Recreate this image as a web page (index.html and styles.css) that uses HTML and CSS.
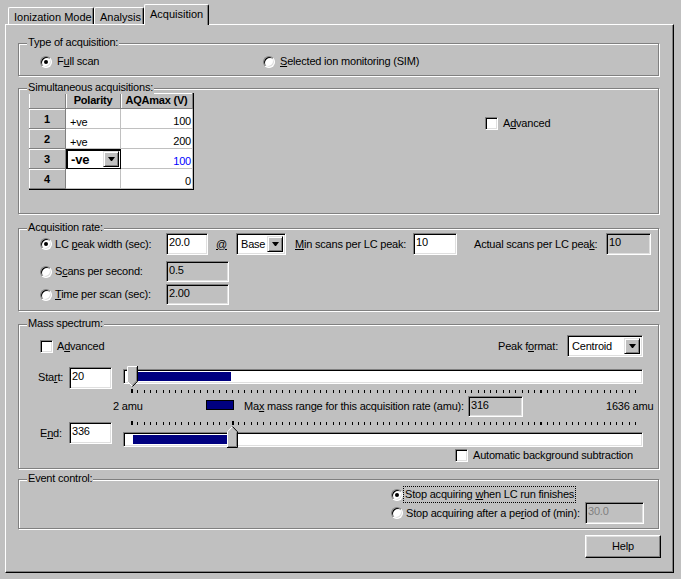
FILE: index.html
```html
<!DOCTYPE html>
<html lang="en">
<head>
    <meta charset="UTF-8">
    <title>Acquisition</title>
    <link rel="stylesheet" href="styles.css">
</head>
<body>

    <!-- Tab strip -->
    <div class="tabs">
        <div class="tab tab-ion">Ionization Mode</div>
        <div class="tab tab-analysis">Analysis</div>
        <div class="tab tab-active">Acquisition</div>
    </div>

    <div class="panel">

        <!-- Type of acquisition -->
        <div class="group g-type">
            <span class="group-title">Type of acquisition:</span>
            <div class="type-row">
                <div class="opt opt-full"><span class="radio on"></span>F<u>u</u>ll scan</div>
                <div class="opt"><span class="radio"></span><u>S</u>elected ion monitoring (SIM)</div>
            </div>
        </div>

        <!-- Simultaneous acquisitions -->
        <div class="group g-sim">
            <span class="group-title">Simultaneous acquisitions:</span>
            <div class="grid">
                <div class="hd"></div>
                <div class="hd">Polarity</div>
                <div class="hd">AQAmax (V)</div>

                <div class="hd rowhd">1</div>
                <div class="cell pol">+ve</div>
                <div class="cell num">100</div>

                <div class="hd rowhd">2</div>
                <div class="cell pol">+ve</div>
                <div class="cell num">200</div>

                <div class="hd rowhd">3</div>
                <div class="cell edit">
                    <span class="edit-text">-ve</span>
                    <span class="drop"><i class="arrow"></i></span>
                </div>
                <div class="cell num changed">100</div>

                <div class="hd rowhd">4</div>
                <div class="cell pol"></div>
                <div class="cell num">0</div>
            </div>
            <div class="opt sim-adv"><span class="check"></span>A<u>d</u>vanced</div>
        </div>

        <!-- Acquisition rate -->
        <div class="group g-rate">
            <span class="group-title">Acquisition rate:</span>
            <div class="rate-row r1">
                <span class="radio on"></span>
                <span class="rate-label">LC <u>p</u>eak width (sec):</span>
                <span class="field w42">20.0</span>
                <span class="at"><u>@</u></span>
                <span class="combo w50"><span class="combo-text">Base</span><span class="drop"><i class="arrow"></i></span></span>
                <span class="min-label"><u>M</u>in scans per LC peak:</span>
                <span class="field w44">10</span>
                <span class="actual-label">Actual scans per LC pea<u>k</u>:</span>
                <span class="field ro w45">10</span>
            </div>
            <div class="rate-row r2">
                <span class="radio"></span>
                <span class="rate-label">S<u>c</u>ans per second:</span>
                <span class="field ro w63">0.5</span>
            </div>
            <div class="rate-row r3">
                <span class="radio"></span>
                <span class="rate-label"><u>T</u>ime per scan (sec):</span>
                <span class="field ro w63">2.00</span>
            </div>
        </div>

        <!-- Mass spectrum -->
        <div class="group g-mass">
            <span class="group-title">Mass spectrum:</span>
            <div class="mass-top">
                <span class="check"></span>
                <span>A<u>d</u>vanced</span>
                <span class="peak-label">Peak f<u>o</u>rmat:</span>
                <span class="combo w76"><span class="combo-text">Centroid</span><span class="drop"><i class="arrow"></i></span></span>
            </div>

            <div class="slider-row start-row">
                <span class="slider-label">Sta<u>r</u>t:</span>
                <span class="field w43 start-field">20</span>
                <div class="slider">
                    <svg class="thumb thumb-down" width="11" height="21" viewBox="0 0 11 21">
                        <polygon points="0,0 11,0 11,15 5.5,21 0,15" fill="#c0c0c0"/>
                        <polyline points="0.5,15.5 0.5,0.5 10,0.5" fill="none" stroke="#fff"/>
                        <polyline points="10.5,0 10.5,15.3 5.5,20.5" fill="none" stroke="#000"/>
                        <polyline points="9.5,1 9.5,15 5.5,19.2" fill="none" stroke="#808080"/>
                        <polyline points="0.5,15.5 5,20" fill="none" stroke="#fff"/>
                    </svg>
                    <div class="track"><div class="fill fill-start"></div></div>
                    <div class="ticks"><i class="mark mark-a"></i></div>
                </div>
            </div>

            <div class="range-row">
                <span class="amu-min">2 amu</span>
                <span class="legend-box"></span>
                <span class="range-label">Ma<u>x</u> mass range for this acquisition rate (amu):</span>
                <span class="field ro w55">316</span>
                <span class="amu-max">1636 amu</span>
            </div>

            <div class="slider-row end-row">
                <span class="slider-label end-label">E<u>n</u>d:</span>
                <span class="field w43">336</span>
                <div class="slider">
                    <div class="ticks"><i class="mark mark-a"></i><i class="mark mark-b"></i></div>
                    <div class="track track-end"><div class="fill fill-end"></div></div>
                    <svg class="thumb thumb-up" width="11" height="22" viewBox="0 0 11 22">
                        <polygon points="5.5,0 11,6 11,22 0,22 0,6" fill="#c0c0c0"/>
                        <polyline points="0.5,21.5 0.5,5.8 5.5,0.5" fill="none" stroke="#fff"/>
                        <polyline points="5.5,0.5 10.5,5.8 10.5,21.5 0,21.5" fill="none" stroke="#000"/>
                        <polyline points="9.5,6.5 9.5,20.5 1,20.5" fill="none" stroke="#808080"/>
                    </svg>
                </div>
            </div>

            <div class="opt auto-row"><span class="check"></span>Automatic background subtraction</div>
        </div>

        <!-- Event control -->
        <div class="group g-event">
            <span class="group-title">Event control:</span>
            <div class="ev-row ev1">
                <span class="radio on"></span>
                <span class="focus">Stop acquiring <u>w</u>hen LC run finishes</span>
            </div>
            <div class="ev-row ev2">
                <span class="radio"></span>
                <span class="ev-label">Stop acquiring after a pe<u>r</u>iod of (min):</span>
                <span class="field ro disabled w59">30.0</span>
            </div>
        </div>

        <div class="btn help">Help</div>
    </div>

</body>
</html>
```

FILE: styles.css
```css
body {
    margin: 0;
    width: 681px;
    height: 579px;
    background: #c0c0c0;
    color: #000;
    font-family: "Liberation Sans", Arial, sans-serif;
    font-size: 11px;
    line-height: 13px;
    letter-spacing: -0.2px;
    overflow: hidden;
    white-space: nowrap;
}

/* ---- tabs ---- */
.tabs {
    display: flex;
    align-items: flex-end;
    height: 24px;
    padding-left: 8px;
    box-sizing: border-box;
}
.tab {
    box-sizing: border-box;
    height: 17px;
    padding: 3px 0 0 5px;
    border-top: 1px solid #fff;
    border-left: 1px solid #fff;
    border-right: 1px solid #000;
    border-radius: 2px 2px 0 0;
    box-shadow: inset -1px 0 #808080;
    letter-spacing: 0;
}
.tab-ion { width: 86px; }
.tab-analysis { width: 50px; }
.tab-active {
    width: 65px;
    height: 21px;
    margin-bottom: -1px;
    background: #c0c0c0;
    position: relative;
    z-index: 1;
}

/* ---- page panel ---- */
.panel {
    box-sizing: border-box;
    width: 669px;
    height: 549px;
    margin-left: 5px;
    padding: 18px 0 0 12px;
    border-top: 1px solid #fff;
    border-left: 1px solid #fff;
    border-right: 1px solid #000;
    border-bottom: 1px solid #000;
    box-shadow: inset -1px -1px #808080;
}

/* ---- etched group box ---- */
.group {
    position: relative;
    box-sizing: border-box;
    width: 641px;
    border: 1px solid #808080;
    box-shadow: inset 1px 1px #fff, 1px 1px #fff;
}
.group-title {
    position: absolute;
    top: -8px;
    left: 8px;
    padding: 0 1px;
    background: #c0c0c0;
}
.g-type { height: 33px; padding: 11px 0 0 21px; }
.g-sim { height: 126px; margin-top: 12px; padding: 4px 0 0 10px; display: flex; align-items: flex-start; }
.g-rate { height: 83px; margin-top: 14px; padding: 4px 0 0 21px; }
.g-mass { height: 145px; margin-top: 13px; padding-top: 10px; }
.g-event { height: 50px; margin-top: 10px; padding: 6px 0 0 372px; }

/* ---- radios / checks ---- */
.opt { display: flex; align-items: center; }
.radio, .check {
    position: relative;
    flex: none;
    box-sizing: border-box;
    background: #fff;
    border: 1px solid;
    border-color: #808080 #fff #fff #808080;
    box-shadow: inset 1px 1px #000, inset -1px -1px #dfdfdf;
}
.radio { width: 12px; height: 12px; border-radius: 50%; margin-right: 3px; }
.radio.on::after {
    content: "";
    position: absolute;
    left: 3px;
    top: 3px;
    width: 4px;
    height: 4px;
    border-radius: 50%;
    background: #000;
}
.check { width: 13px; height: 13px; margin-right: 5px; }

.type-row { display: flex; height: 13px; align-items: center; }
.opt-full { width: 223px; }
.type-row .radio { margin-right: 5px; }

/* ---- edit fields ---- */
.field, .combo {
    box-sizing: border-box;
    display: inline-block;
    flex: none;
    height: 22px;
    background: #fff;
    border: 1px solid;
    border-color: #808080 #fff #fff #808080;
    box-shadow: inset 1px 1px #000, inset -1px -1px #dfdfdf;
}
.field { padding: 2px 0 0 2px; }
.field.ro { background: #c0c0c0; }
.field.disabled { color: #808080; }
.w42 { width: 42px; }
.w43 { width: 43px; }
.w44 { width: 44px; }
.w45 { width: 45px; }
.w50 { width: 50px; }
.w55 { width: 55px; height: 21px; }
.w59 { width: 59px; }
.w63 { width: 63px; height: 21px; }
.w76 { width: 76px; }

.combo { display: flex; padding: 2px; }
.combo-text { flex: 1; padding: 2px 0 0 2px; }
.drop {
    box-sizing: border-box;
    width: 16px;
    height: 16px;
    flex: none;
    display: flex;
    align-items: center;
    justify-content: center;
    background: #c0c0c0;
    border: 1px solid;
    border-color: #dfdfdf #000 #000 #dfdfdf;
    box-shadow: inset 1px 1px #fff, inset -1px -1px #808080;
}
.arrow {
    width: 1px;
    height: 0;
    border-top: 4px solid #000;
    border-left: 3px solid transparent;
    border-right: 3px solid transparent;
}

/* ---- grid (simultaneous acquisitions) ---- */
.grid {
    display: grid;
    grid-template-columns: 37px 55px 72px;
    grid-template-rows: 16px repeat(4, 20px);
    border-right: 1px solid #000;
    border-bottom: 1px solid #000;
    flex: none;
}
.hd {
    box-sizing: border-box;
    background: #c0c0c0;
    border-right: 1px solid #808080;
    border-bottom: 1px solid #808080;
    box-shadow: inset 1px 1px #fff;
    font-weight: bold;
    text-align: center;
    padding-top: 1px;
}
.rowhd { padding-top: 4px; }
.cell {
    box-sizing: border-box;
    background: #fff;
    border-right: 1px solid #c0c0c0;
    border-bottom: 1px solid #c0c0c0;
}
.cell.pol { padding: 7px 0 0 4px; }
.cell.num { text-align: right; padding: 6px 1px 0 0; }
.cell.changed { color: #0000ff; }
.cell.edit {
    display: flex;
    align-items: center;
    padding: 0 1px 0 4px;
    border: 1px solid #000;
    box-shadow: inset 1px 1px #000;
}
.edit-text { flex: 1; font-size: 13px; font-weight: bold; }
.sim-adv { margin: 24px 0 0 291px; }

/* ---- acquisition rate ---- */
.rate-row { display: flex; align-items: center; }
.r1 { height: 22px; }
.r2 { height: 21px; margin-top: 6px; }
.r3 { height: 21px; margin-top: 2px; }
.rate-label { width: 111px; }
.at { width: 12px; margin-left: 8px; margin-right: 8px; }
.min-label { width: 118px; margin-left: 9px; }
.actual-label { width: 132px; margin-left: 17px; }

/* ---- mass spectrum ---- */
.mass-top {
    display: flex;
    align-items: center;
    height: 22px;
    padding: 0 15px 0 21px;
}
.mass-top .check { margin-right: 4px; }
.peak-label { margin-left: auto; margin-right: 9px; }

.slider-row { display: flex; align-items: flex-start; padding-left: 19px; }
.start-row { margin-top: 9px; }
.start-field { margin-top: 1px; }
.slider-label { width: 31px; padding-top: 5px; }
.end-label { box-sizing: border-box; padding-left: 2px; }
.slider {
    position: relative;
    width: 520px;
    margin-left: 11px;
}
.track {
    box-sizing: border-box;
    height: 15px;
    margin-top: 3px;
    padding-top: 2px;
    background: #fff;
    border: 1px solid;
    border-color: #808080 #fff #fff #808080;
    box-shadow: inset 1px 1px #000, inset -1px -1px #dfdfdf;
}
.track-end { margin-top: 7px; }
.fill { height: 9px; background: #000080; }
.fill-start { margin-left: 14px; width: 93px; }
.fill-end { margin-left: 9px; width: 94px; }
.ticks {
    position: relative;
    height: 3px;
    margin: 6px 4px 0 8px;
    background: repeating-linear-gradient(90deg, #000 0 1px, transparent 1px 6.3px);
}
.end-row .ticks { margin-top: 0; }
.mark {
    position: absolute;
    top: -1px;
    width: 2px;
    height: 4px;
    background: #000;
}
.mark-a { left: 0; }
.mark-b { left: 101px; }
.thumb { position: absolute; }
.thumb-down { left: 4px; top: 0; }
.thumb-up { left: 104px; top: 4px; }

.range-row {
    display: flex;
    align-items: center;
    height: 21px;
    margin-top: 3px;
    padding-left: 94px;
}
.amu-min { width: 93px; }
.legend-box {
    box-sizing: border-box;
    width: 28px;
    height: 10px;
    background: #000080;
    border: 1px solid #000;
    margin-top: -3px;
}
.range-label { width: 224px; margin-left: 10px; }
.amu-max { margin-left: 83px; }

.end-row { margin-top: 5px; }
.auto-row { margin: 2px 0 0 436px; height: 13px; }

/* ---- event control ---- */
.ev-row { display: flex; align-items: center; }
.ev-row .radio { margin-right: 1px; }
.ev1 { height: 17px; }
.ev2 { height: 22px; margin-top: -1px; }
.focus { outline: 1px dotted #000; outline-offset: 0; padding: 1px; }
.ev-label { width: 179px; margin-left: 2px; }

/* ---- buttons ---- */
.btn {
    box-sizing: border-box;
    width: 76px;
    height: 23px;
    padding-top: 4px;
    text-align: center;
    background: #c0c0c0;
    border: 1px solid;
    border-color: #fff #000 #000 #fff;
    box-shadow: inset -1px -1px #808080, inset 1px 1px #dfdfdf;
}
.help { margin: 6px 0 0 567px; }
```
